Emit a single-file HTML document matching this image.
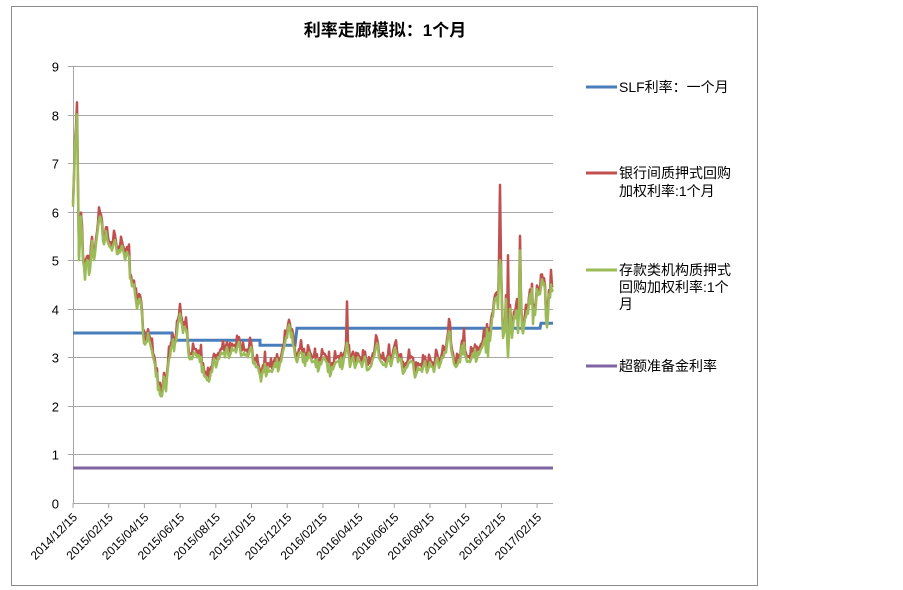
<!DOCTYPE html>
<html><head><meta charset="utf-8"><style>
html,body{margin:0;padding:0;background:#fff;width:903px;height:590px;overflow:hidden}
svg{display:block}
text{font-family:"Liberation Sans","Noto Sans CJK SC",sans-serif}
</style></head><body>
<svg id="s" width="903" height="590" viewBox="0 0 903 590" xmlns="http://www.w3.org/2000/svg">
<rect x="11.5" y="6.5" width="746" height="579" fill="#fff" stroke="#8c8c8c" stroke-width="1"/>
<text x="385" y="36" font-size="17" font-weight="bold" text-anchor="middle" fill="#000">利率走廊模拟：1个月</text>
<g id="grid" stroke="#a6a6a6" stroke-width="1"></g>
<g id="ylab" font-size="13" fill="#000" text-anchor="end"></g>
<g id="xlab" font-size="12" fill="#000" text-anchor="end"></g>
<polyline id="blue" fill="none" stroke="#4a7ebb" stroke-width="3"/>
<line x1="73" y1="468" x2="553" y2="468" stroke="#8064a2" stroke-width="3"/>
<polyline id="red" fill="none" stroke="#c0504d" stroke-width="2.5" stroke-linejoin="round"/>
<polyline id="green" fill="none" stroke="#9bbb59" stroke-width="2.5" stroke-linejoin="round"/>
<g font-size="14" fill="#000">
<line x1="586" y1="87" x2="617" y2="87" stroke="#4a7ebb" stroke-width="3"/>
<text x="619" y="92">SLF利率：一个月</text>
<line x1="586" y1="173" x2="617" y2="173" stroke="#c0504d" stroke-width="3"/>
<text x="619" y="178">银行间质押式回购</text>
<text x="619" y="196">加权利率:1个月</text>
<line x1="586" y1="270" x2="617" y2="270" stroke="#9bbb59" stroke-width="3"/>
<text x="619" y="275">存款类机构质押式</text>
<text x="619" y="292">回购加权利率:1个</text>
<text x="619" y="309">月</text>
<line x1="586" y1="366" x2="617" y2="366" stroke="#8064a2" stroke-width="3"/>
<text x="619" y="371">超额准备金利率</text>
</g>
</svg>
<script>
var NS="http://www.w3.org/2000/svg";
function Y(v){return 503-48.56*v;}
var g=document.getElementById('grid'),yl=document.getElementById('ylab'),xl=document.getElementById('xlab');
for(var i=0;i<=9;i++){var y=Math.round(Y(i))+0.5;
 var l=document.createElementNS(NS,'line');l.setAttribute('x1',i==0?73:68);l.setAttribute('x2',553);l.setAttribute('y1',y);l.setAttribute('y2',y);g.appendChild(l);
 var t=document.createElementNS(NS,'text');t.setAttribute('x',59);t.setAttribute('y',y+5);t.textContent=i;yl.appendChild(t);}
var a=document.createElementNS(NS,'line');a.setAttribute('x1',73.5);a.setAttribute('x2',73.5);a.setAttribute('y1',66);a.setAttribute('y2',503);g.appendChild(a);
var labs=["2014/12/15","2015/02/15","2015/04/15","2015/06/15","2015/08/15","2015/10/15","2015/12/15","2016/02/15","2016/04/15","2016/06/15","2016/08/15","2016/10/15","2016/12/15","2017/02/15"];
for(var k=0;k<labs.length;k++){var x=73+k*35.7;
 var tk=document.createElementNS(NS,'line');tk.setAttribute('x1',x);tk.setAttribute('x2',x);tk.setAttribute('y1',503);tk.setAttribute('y2',508);g.appendChild(tk);
 var t=document.createElementNS(NS,'text');t.setAttribute('transform','translate('+(x+5)+',518) rotate(-45)');t.textContent=labs[k];xl.appendChild(t);}
document.getElementById('blue').setAttribute('points',[[73,3.5],[172,3.5],[172,3.35],[260,3.35],[260,3.25],[295,3.25],[297,3.6],[540,3.6],[541,3.7],[553,3.7]].map(function(p){return p[0]+','+Y(p[1]).toFixed(1)}).join(' '));
var d=[[73,6.1],[75,7.4],[77,8.0],[79,5.0],[81,5.9],[83,5.0],[85,4.6],[87,5.0],[89,4.7],[92,5.4],[94,5.0],[97,5.5],[100,5.9],[103,5.4],[106,5.6],[109,5.3],[112,5.2],[116,5.3],[119,5.2],[122,5.3],[125,5.0],[128,5.1],[131,4.6],[134,4.5],[137,4.0],[140,4.2],[143,3.5],[146,3.3],[148,3.5],[151,3.2],[153,3.0],[156,2.6],[159,2.4],[162,2.2],[164,2.6],[166,2.3],[168,2.8],[170,3.0],[172,3.2],[175,3.3],[178,3.7],[180,3.9],[183,3.5],[185,3.6],[188,3.2],[191,3.0],[194,3.1],[197,3.0],[200,2.9],[203,2.8],[206,2.6],[209,2.5],[212,2.7],[215,2.9],[218,3.0],[221,3.1],[225,3.0],[228,3.1],[232,3.2],[236,3.1],[240,3.2],[244,3.1],[248,3.0],[252,3.1],[255,2.9],[258,2.8],[261,2.5],[264,2.7],[268,2.8],[272,2.7],[276,2.8],[280,2.9],[284,3.2],[287,3.4],[290,3.6],[292,3.5],[294,3.2],[297,2.9],[300,3.1],[303,2.9],[306,3.0],[309,3.1],[312,2.9],[316,2.8],[320,2.9],[324,3.0],[328,2.7],[332,2.8],[336,2.9],[340,2.8],[344,3.0],[347,3.3],[350,2.8],[354,2.9],[358,3.0],[362,2.8],[366,2.9],[370,2.8],[374,3.0],[378,3.2],[382,2.9],[386,2.8],[390,2.9],[395,3.2],[398,2.9],[402,2.8],[406,2.8],[410,2.9],[414,2.7],[418,2.8],[422,2.7],[426,2.8],[430,2.9],[434,2.7],[438,2.9],[442,3.0],[446,3.1],[450,3.5],[453,3.0],[456,2.8],[460,2.9],[464,3.3],[466,3.0],[470,2.9],[474,3.0],[478,3.1],[482,3.2],[486,3.1],[489,3.5],[492,3.8],[495,4.2],[498,4.0],[500,5.0],[502,4.0],[504,3.5],[506,4.2],[508,3.0],[510,4.0],[512,3.4],[515,3.8],[518,3.5],[520,5.2],[522,3.6],[525,3.8],[528,3.9],[531,4.1],[534,4.0],[537,4.4],[540,4.3],[543,4.5],[546,3.8],[549,4.3],[551,4.5],[553,4.4]];
var spikes={77:8.25,347:4.15,450:3.7,500:6.55,508:5.1,520:5.5,551:4.8,180:4.1,464:3.6};
var gp=[],rp=[],c=0;
for(var i=0;i<d.length;i++){
 var x=d[i][0],v=d[i][1];
 gp.push(x+','+Y(v).toFixed(1));
 rp.push(x+','+Y(spikes[x]!==undefined?spikes[x]:v+0.08).toFixed(1));
 if(i<d.length-1){var nx=d[i+1][0],nv=d[i+1][1];
  for(var s=1;s<nx-x;s++){c++;var f=s/(nx-x);var j=(((c*37)%9)-4)*0.035*(x>480?2.5:1);
   var mv=v+(nv-v)*f+j;var px=x+s;gp.push(px+','+Y(mv).toFixed(1));
   var rv=mv+0.1+(((c*13)%5==0)?0.15:0);rp.push(px+','+Y(rv).toFixed(1));}}
}
document.getElementById('green').setAttribute('points',gp.join(' '));
document.getElementById('red').setAttribute('points',rp.join(' '));
</script>
</body></html>
